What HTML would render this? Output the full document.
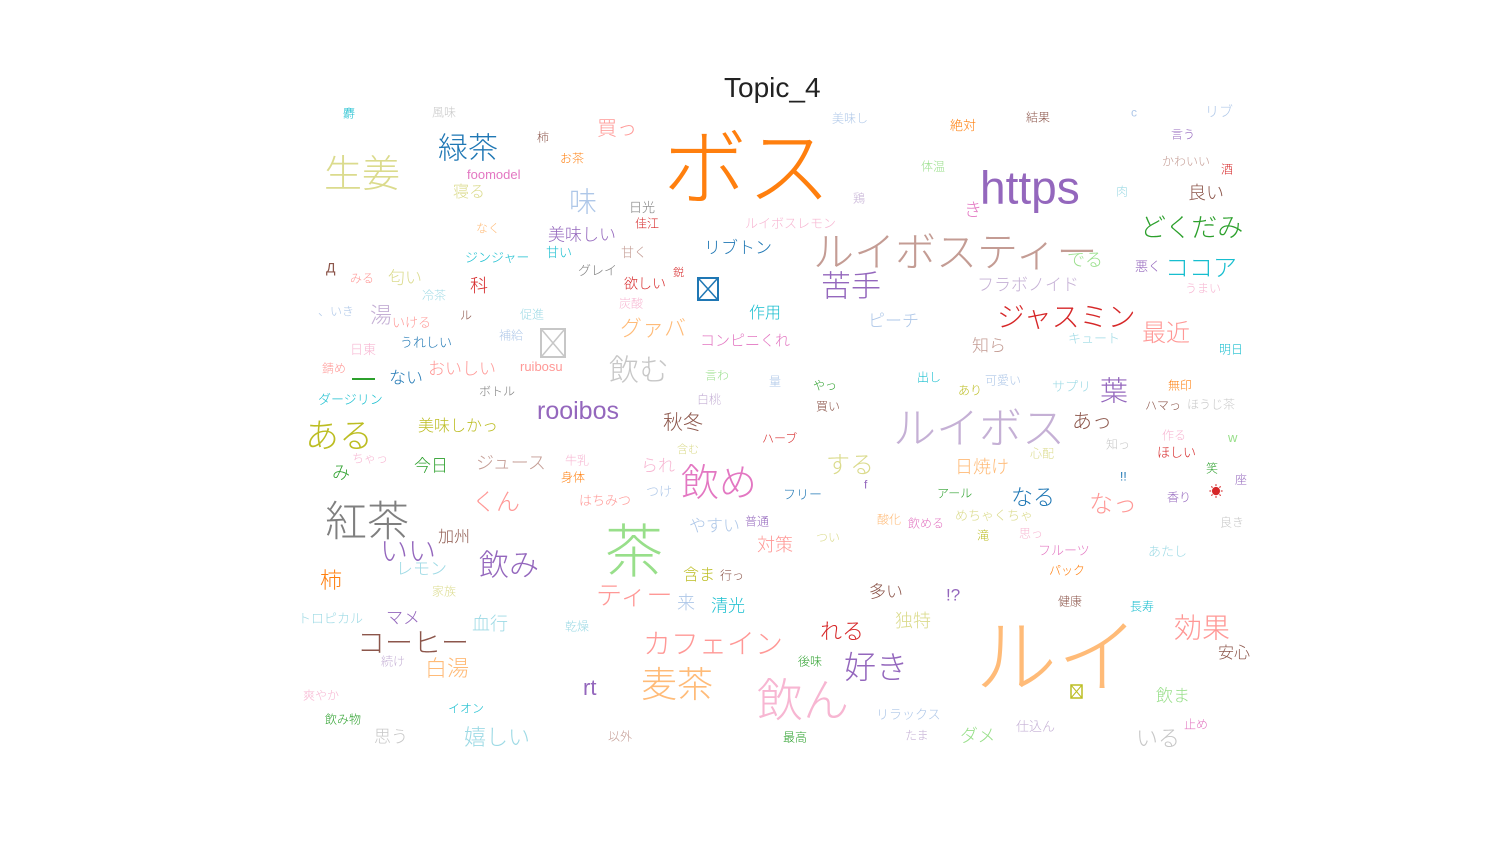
<!DOCTYPE html>
<html><head><meta charset="utf-8">
<style>
html,body{margin:0;padding:0;background:#fff;}
body{width:1512px;height:864px;position:relative;overflow:hidden;font-family:"Liberation Sans","Noto Sans CJK JP",sans-serif;font-weight:300;}
span{position:absolute;line-height:1;white-space:nowrap;transform:translateY(-45%);}
svg.b{position:absolute;}
</style></head><body>
<span style="left:724px;top:88px;font-size:28px;color:#222;font-weight:400;transform:translateY(-50%)">Topic_4</span>
<span style="left:343px;top:113px;font-size:12px;color:#17becf">麝</span>
<span style="left:432px;top:112px;font-size:12px;color:#c7c7c7">風味</span>
<span style="left:597px;top:128px;font-size:20px;color:#ff9896">買っ</span>
<span style="left:663px;top:165px;font-size:84px;color:#ff7f0e">ボス</span>
<span style="left:832px;top:118px;font-size:12px;color:#aec7e8">美味し</span>
<span style="left:950px;top:125px;font-size:13px;color:#ff7f0e">絶対</span>
<span style="left:1026px;top:117px;font-size:12px;color:#8c564b">結果</span>
<span style="left:1131px;top:112px;font-size:12px;color:#aec7e8">c</span>
<span style="left:1205px;top:111px;font-size:14px;color:#aec7e8">リブ</span>
<span style="left:1171px;top:134px;font-size:12px;color:#9467bd">言う</span>
<span style="left:438px;top:148px;font-size:30px;color:#1f77b4">緑茶</span>
<span style="left:537px;top:137px;font-size:12px;color:#8c564b">柿</span>
<span style="left:560px;top:158px;font-size:12px;color:#ff7f0e">お茶</span>
<span style="left:324px;top:173px;font-size:38px;color:#dbdb8d">生姜</span>
<span style="left:467px;top:174px;font-size:13px;color:#e377c2">foomodel</span>
<span style="left:453px;top:192px;font-size:16px;color:#dbdb8d">寝る</span>
<span style="left:569px;top:201px;font-size:28px;color:#aec7e8">味</span>
<span style="left:629px;top:207px;font-size:13px;color:#7f7f7f">日光</span>
<span style="left:635px;top:223px;font-size:12px;color:#d62728">佳江</span>
<span style="left:745px;top:223px;font-size:13px;color:#f7b6d2">ルイボスレモン</span>
<span style="left:921px;top:166px;font-size:12px;color:#98df8a">体温</span>
<span style="left:980px;top:185px;font-size:46px;color:#9467bd">https</span>
<span style="left:853px;top:198px;font-size:12px;color:#c5b0d5">鶏</span>
<span style="left:1116px;top:191px;font-size:12px;color:#9edae5">肉</span>
<span style="left:1162px;top:161px;font-size:12px;color:#c49c94">かわいい</span>
<span style="left:1221px;top:169px;font-size:12px;color:#d62728">酒</span>
<span style="left:1188px;top:192px;font-size:18px;color:#8c564b">良い</span>
<span style="left:964px;top:209px;font-size:18px;color:#e377c2">き</span>
<span style="left:1140px;top:226px;font-size:26px;color:#2ca02c">どくだみ</span>
<span style="left:476px;top:228px;font-size:12px;color:#ffbb78">なく</span>
<span style="left:548px;top:234px;font-size:17px;color:#9467bd">美味しい</span>
<span style="left:621px;top:252px;font-size:13px;color:#c49c94">甘く</span>
<span style="left:704px;top:247px;font-size:17px;color:#1f77b4">リブトン</span>
<span style="left:813px;top:251px;font-size:41px;color:#c49c94">ルイボスティー</span>
<span style="left:465px;top:257px;font-size:13px;color:#17becf">ジンジャー</span>
<span style="left:546px;top:252px;font-size:13px;color:#17becf">甘い</span>
<span style="left:578px;top:270px;font-size:13px;color:#7f7f7f">グレイ</span>
<span style="left:673px;top:273px;font-size:11px;color:#d62728">鋭</span>
<span style="left:1067px;top:259px;font-size:18px;color:#98df8a">でる</span>
<span style="left:1135px;top:266px;font-size:13px;color:#9467bd">悪く</span>
<span style="left:1165px;top:268px;font-size:24px;color:#17becf">ココア</span>
<span style="left:326px;top:267px;font-size:14px;color:#8c564b">Д</span>
<span style="left:350px;top:278px;font-size:12px;color:#ff9896">みる</span>
<span style="left:388px;top:277px;font-size:17px;color:#dbdb8d">匂い</span>
<span style="left:470px;top:285px;font-size:18px;color:#d62728">科</span>
<span style="left:624px;top:283px;font-size:14px;color:#d62728">欲しい</span>
<svg class="b" style="left:697px;top:277px" width="22" height="24"><rect x="1" y="1" width="20" height="22" fill="none" stroke="#1f77b4" stroke-width="2"/><path d="M2 2L20 22M20 2L2 22" stroke="#1f77b4" stroke-width="1.5"/></svg>
<span style="left:821px;top:286px;font-size:30px;color:#9467bd">苦手</span>
<span style="left:977px;top:284px;font-size:17px;color:#c5b0d5">フラボノイド</span>
<span style="left:1185px;top:288px;font-size:12px;color:#f7b6d2">うまい</span>
<span style="left:422px;top:295px;font-size:12px;color:#9edae5">冷茶</span>
<span style="left:619px;top:303px;font-size:12px;color:#f7b6d2">炭酸</span>
<span style="left:749px;top:313px;font-size:16px;color:#17becf">作用</span>
<span style="left:997px;top:316px;font-size:28px;color:#d62728">ジャスミン</span>
<span style="left:868px;top:320px;font-size:17px;color:#aec7e8">ピーチ</span>
<span style="left:318px;top:311px;font-size:12px;color:#aec7e8">、いき</span>
<span style="left:370px;top:315px;font-size:22px;color:#c5b0d5">湯</span>
<span style="left:392px;top:322px;font-size:13px;color:#ff9896">いける</span>
<span style="left:460px;top:315px;font-size:12px;color:#8c564b">ル</span>
<span style="left:520px;top:314px;font-size:12px;color:#9edae5">促進</span>
<span style="left:499px;top:335px;font-size:12px;color:#aec7e8">補給</span>
<svg class="b" style="left:540px;top:328px" width="26" height="30"><rect x="1" y="1" width="24" height="28" fill="none" stroke="#c7c7c7" stroke-width="2"/><path d="M2 2L24 28M24 2L2 28" stroke="#c7c7c7" stroke-width="1.5"/></svg>
<span style="left:620px;top:328px;font-size:22px;color:#ffbb78">グァバ</span>
<span style="left:700px;top:340px;font-size:15px;color:#e377c2">コンピニくれ</span>
<span style="left:1068px;top:338px;font-size:13px;color:#9edae5">キュート</span>
<span style="left:1142px;top:333px;font-size:24px;color:#ff9896">最近</span>
<span style="left:972px;top:345px;font-size:17px;color:#c49c94">知ら</span>
<span style="left:1219px;top:349px;font-size:12px;color:#17becf">明日</span>
<span style="left:400px;top:342px;font-size:13px;color:#1f77b4">うれしい</span>
<span style="left:350px;top:349px;font-size:13px;color:#f7b6d2">日東</span>
<span style="left:609px;top:370px;font-size:30px;color:#c7c7c7">飲む</span>
<span style="left:322px;top:368px;font-size:12px;color:#ff9896">錆め</span>
<div style="position:absolute;left:352px;top:378px;width:23px;height:2px;background:#2ca02c"></div>
<span style="left:389px;top:377px;font-size:17px;color:#1f77b4">ない</span>
<span style="left:428px;top:368px;font-size:17px;color:#ff9896">おいしい</span>
<span style="left:520px;top:366px;font-size:13px;color:#ff9896">ruibosu</span>
<span style="left:705px;top:375px;font-size:12px;color:#98df8a">言わ</span>
<span style="left:769px;top:381px;font-size:12px;color:#aec7e8">量</span>
<span style="left:813px;top:385px;font-size:12px;color:#2ca02c">やっ</span>
<span style="left:917px;top:377px;font-size:12px;color:#17becf">出し</span>
<span style="left:985px;top:380px;font-size:12px;color:#aec7e8">可愛い</span>
<span style="left:958px;top:390px;font-size:12px;color:#bcbd22">あり</span>
<span style="left:1052px;top:386px;font-size:13px;color:#9edae5">サプリ</span>
<span style="left:1100px;top:390px;font-size:28px;color:#9467bd">葉</span>
<span style="left:1168px;top:385px;font-size:12px;color:#ff7f0e">無印</span>
<span style="left:318px;top:399px;font-size:13px;color:#17becf">ダージリン</span>
<span style="left:479px;top:391px;font-size:12px;color:#7f7f7f">ボトル</span>
<span style="left:697px;top:399px;font-size:12px;color:#c5b0d5">白桃</span>
<span style="left:816px;top:406px;font-size:12px;color:#8c564b">買い</span>
<span style="left:1145px;top:405px;font-size:12px;color:#8c564b">ハマっ</span>
<span style="left:1187px;top:404px;font-size:12px;color:#c7c7c7">ほうじ茶</span>
<span style="left:537px;top:410px;font-size:25px;color:#9467bd">rooibos</span>
<span style="left:305px;top:435px;font-size:34px;color:#bcbd22">ある</span>
<span style="left:418px;top:426px;font-size:16px;color:#bcbd22">美味しかっ</span>
<span style="left:663px;top:422px;font-size:20px;color:#8c564b">秋冬</span>
<span style="left:893px;top:428px;font-size:43px;color:#c5b0d5">ルイボス</span>
<span style="left:1072px;top:421px;font-size:20px;color:#8c564b">あっ</span>
<span style="left:1162px;top:435px;font-size:12px;color:#f7b6d2">作る</span>
<span style="left:1228px;top:437px;font-size:13px;color:#98df8a">w</span>
<span style="left:1106px;top:444px;font-size:12px;color:#c7c7c7">知っ</span>
<span style="left:762px;top:438px;font-size:12px;color:#d62728">ハーブ</span>
<span style="left:677px;top:450px;font-size:11px;color:#dbdb8d">含む</span>
<span style="left:1157px;top:452px;font-size:13px;color:#d62728">ほしい</span>
<span style="left:1030px;top:453px;font-size:12px;color:#dbdb8d">心配</span>
<span style="left:826px;top:465px;font-size:24px;color:#dbdb8d">する</span>
<span style="left:955px;top:466px;font-size:18px;color:#ffbb78">日焼け</span>
<span style="left:352px;top:458px;font-size:12px;color:#f7b6d2">ちゃっ</span>
<span style="left:332px;top:472px;font-size:18px;color:#2ca02c">み</span>
<span style="left:414px;top:465px;font-size:17px;color:#2ca02c">今日</span>
<span style="left:476px;top:462px;font-size:18px;color:#c49c94">ジュース</span>
<span style="left:565px;top:460px;font-size:12px;color:#f7b6d2">牛乳</span>
<span style="left:561px;top:477px;font-size:12px;color:#ff7f0e">身体</span>
<span style="left:641px;top:465px;font-size:17px;color:#f7b6d2">られ</span>
<span style="left:681px;top:482px;font-size:38px;color:#e377c2">飲め</span>
<span style="left:1206px;top:468px;font-size:12px;color:#2ca02c">笑</span>
<span style="left:1120px;top:476px;font-size:12px;color:#1f77b4">!!</span>
<span style="left:1235px;top:479px;font-size:12px;color:#9467bd">座</span>
<span style="left:864px;top:484px;font-size:12px;color:#9467bd">f</span>
<span style="left:325px;top:520px;font-size:42px;color:#7f7f7f">紅茶</span>
<span style="left:472px;top:502px;font-size:24px;color:#ff9896">くん</span>
<span style="left:579px;top:500px;font-size:13px;color:#ff9896">はちみつ</span>
<span style="left:646px;top:491px;font-size:13px;color:#aec7e8">つけ</span>
<span style="left:783px;top:494px;font-size:13px;color:#1f77b4">フリー</span>
<span style="left:937px;top:493px;font-size:12px;color:#2ca02c">アール</span>
<span style="left:1011px;top:497px;font-size:22px;color:#1f77b4">なる</span>
<span style="left:1089px;top:504px;font-size:24px;color:#ff9896">なっ</span>
<span style="left:1167px;top:497px;font-size:12px;color:#9467bd">香り</span>
<span style="left:1209px;top:491px;font-size:14px;color:#d62728">☀</span>
<span style="left:877px;top:519px;font-size:12px;color:#ffbb78">酸化</span>
<span style="left:908px;top:523px;font-size:12px;color:#e377c2">飲める</span>
<span style="left:955px;top:515px;font-size:13px;color:#dbdb8d">めちゃくちゃ</span>
<span style="left:1220px;top:522px;font-size:12px;color:#c7c7c7">良き</span>
<span style="left:689px;top:525px;font-size:17px;color:#aec7e8">やすい</span>
<span style="left:745px;top:521px;font-size:12px;color:#9467bd">普通</span>
<span style="left:605px;top:550px;font-size:58px;color:#98df8a">茶</span>
<span style="left:438px;top:537px;font-size:16px;color:#8c564b">加州</span>
<span style="left:380px;top:550px;font-size:28px;color:#9467bd">いい</span>
<span style="left:757px;top:544px;font-size:18px;color:#ff9896">対策</span>
<span style="left:816px;top:537px;font-size:12px;color:#dbdb8d">つい</span>
<span style="left:977px;top:535px;font-size:12px;color:#bcbd22">滝</span>
<span style="left:1019px;top:533px;font-size:12px;color:#f7b6d2">思っ</span>
<span style="left:1038px;top:550px;font-size:13px;color:#e377c2">フルーツ</span>
<span style="left:1148px;top:551px;font-size:13px;color:#9edae5">あたし</span>
<span style="left:479px;top:565px;font-size:30px;color:#9467bd">飲み</span>
<span style="left:396px;top:568px;font-size:17px;color:#9edae5">レモン</span>
<span style="left:1049px;top:570px;font-size:12px;color:#ff7f0e">パック</span>
<span style="left:320px;top:580px;font-size:22px;color:#ff7f0e">柿</span>
<span style="left:683px;top:575px;font-size:16px;color:#bcbd22">含ま</span>
<span style="left:720px;top:575px;font-size:12px;color:#8c564b">行っ</span>
<span style="left:432px;top:591px;font-size:12px;color:#dbdb8d">家族</span>
<span style="left:596px;top:594px;font-size:26px;color:#ff9896">ティー</span>
<span style="left:869px;top:591px;font-size:17px;color:#8c564b">多い</span>
<span style="left:946px;top:594px;font-size:17px;color:#9467bd">!?</span>
<span style="left:677px;top:602px;font-size:18px;color:#aec7e8">来</span>
<span style="left:711px;top:605px;font-size:17px;color:#17becf">清光</span>
<span style="left:298px;top:618px;font-size:13px;color:#9edae5">トロピカル</span>
<span style="left:386px;top:617px;font-size:17px;color:#9467bd">マメ</span>
<span style="left:472px;top:623px;font-size:18px;color:#9edae5">血行</span>
<span style="left:1058px;top:601px;font-size:12px;color:#8c564b">健康</span>
<span style="left:1130px;top:606px;font-size:12px;color:#17becf">長寿</span>
<span style="left:565px;top:626px;font-size:12px;color:#9edae5">乾燥</span>
<span style="left:895px;top:620px;font-size:18px;color:#dbdb8d">独特</span>
<span style="left:1174px;top:627px;font-size:28px;color:#ff9896">効果</span>
<span style="left:357px;top:642px;font-size:28px;color:#8c564b">コーヒー</span>
<span style="left:643px;top:643px;font-size:28px;color:#ff9896">カフェイン</span>
<span style="left:820px;top:631px;font-size:22px;color:#d62728">れる</span>
<span style="left:975px;top:655px;font-size:82px;color:#ffbb78">ルイ</span>
<span style="left:1218px;top:653px;font-size:16px;color:#8c564b">安心</span>
<span style="left:381px;top:661px;font-size:12px;color:#c5b0d5">続け</span>
<span style="left:425px;top:668px;font-size:22px;color:#ffbb78">白湯</span>
<span style="left:844px;top:666px;font-size:32px;color:#9467bd">好き</span>
<span style="left:798px;top:661px;font-size:12px;color:#2ca02c">後味</span>
<span style="left:641px;top:683px;font-size:36px;color:#ffbb78">麦茶</span>
<span style="left:583px;top:687px;font-size:22px;color:#9467bd">rt</span>
<span style="left:757px;top:698px;font-size:46px;color:#f7b6d2">飲ん</span>
<span style="left:303px;top:695px;font-size:12px;color:#f7b6d2">爽やか</span>
<svg class="b" style="left:1070px;top:684px" width="13" height="15"><rect x="1" y="1" width="11" height="13" fill="none" stroke="#bcbd22" stroke-width="1.5"/><path d="M1 1L12 14M12 1L1 14" stroke="#bcbd22" stroke-width="1"/></svg>
<span style="left:1156px;top:695px;font-size:17px;color:#98df8a">飲ま</span>
<span style="left:448px;top:708px;font-size:12px;color:#17becf">イオン</span>
<span style="left:325px;top:719px;font-size:12px;color:#2ca02c">飲み物</span>
<span style="left:876px;top:714px;font-size:13px;color:#aec7e8">リラックス</span>
<span style="left:1016px;top:726px;font-size:13px;color:#c5b0d5">仕込ん</span>
<span style="left:1184px;top:724px;font-size:12px;color:#e377c2">止め</span>
<span style="left:374px;top:736px;font-size:17px;color:#c7c7c7">思う</span>
<span style="left:464px;top:737px;font-size:22px;color:#9edae5">嬉しい</span>
<span style="left:608px;top:736px;font-size:12px;color:#c49c94">以外</span>
<span style="left:783px;top:737px;font-size:12px;color:#2ca02c">最高</span>
<span style="left:905px;top:735px;font-size:12px;color:#c5b0d5">たま</span>
<span style="left:960px;top:735px;font-size:18px;color:#98df8a">ダメ</span>
<span style="left:1136px;top:738px;font-size:22px;color:#c7c7c7">いる</span>
</body></html>
